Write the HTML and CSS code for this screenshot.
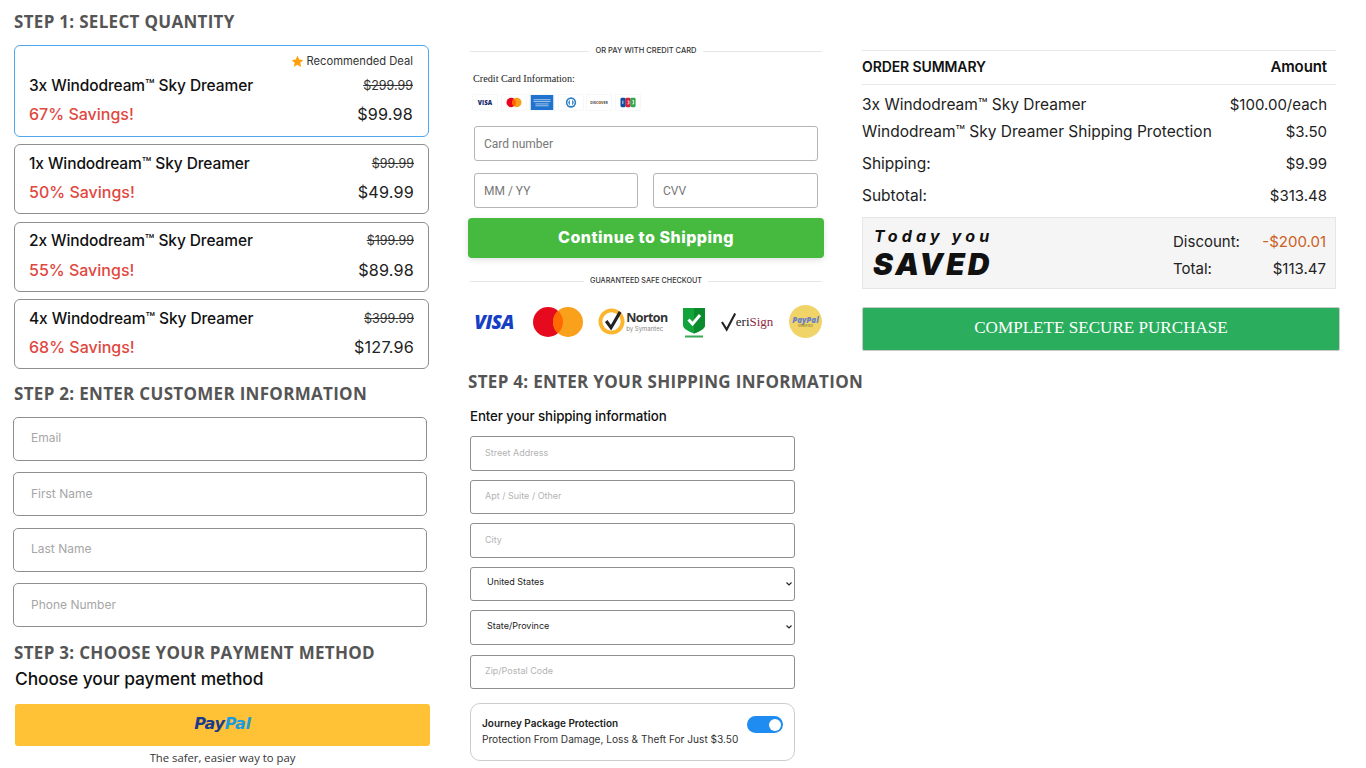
FILE: index.html
```html
<!DOCTYPE html>
<html lang="en">
<head>
<meta charset="utf-8">
<title>Checkout</title>
<link rel="stylesheet" href="styles.css">
</head>
<body>
<main class="page">
  <section class="col col-left">
    <h2 class="step step-1">STEP 1: SELECT QUANTITY</h2>
    <div class="deal deal-active">
      <div class="rec"><svg class="star" viewBox="0 0 24 24"><path d="M12 1.500l3.200 6.900 7.500.9-5.500 5.200 1.400 7.500L12 18l-6.600 3.600 1.400-7.500L1.300 9.300l7.500-.9z"/></svg><span>Recommended Deal</span></div>
      <div class="deal-row"><span class="deal-name">3x Windodream™ Sky Dreamer</span><s class="was">$299.99</s></div>
      <div class="deal-row deal-row-2"><span class="save">67% Savings!</span><span class="now">$99.98</span></div>
    </div>
    <div class="deal">
      <div class="deal-row"><span class="deal-name">1x Windodream™ Sky Dreamer</span><s class="was">$99.99</s></div>
      <div class="deal-row deal-row-2"><span class="save">50% Savings!</span><span class="now">$49.99</span></div>
    </div>
    <div class="deal">
      <div class="deal-row"><span class="deal-name">2x Windodream™ Sky Dreamer</span><s class="was">$199.99</s></div>
      <div class="deal-row deal-row-2"><span class="save">55% Savings!</span><span class="now">$89.98</span></div>
    </div>
    <div class="deal">
      <div class="deal-row"><span class="deal-name">4x Windodream™ Sky Dreamer</span><s class="was">$399.99</s></div>
      <div class="deal-row deal-row-2"><span class="save">68% Savings!</span><span class="now">$127.96</span></div>
    </div>
    <h2 class="step step-2">STEP 2: ENTER CUSTOMER INFORMATION</h2>
    <div class="cust-fields">
      <input class="cust" placeholder="Email">
      <input class="cust" placeholder="First Name">
      <input class="cust" placeholder="Last Name">
      <input class="cust" placeholder="Phone Number">
    </div>
    <h2 class="step step-3">STEP 3: CHOOSE YOUR PAYMENT METHOD</h2>
    <h3 class="choose">Choose your payment method</h3>
    <button class="paypal"><span class="pp-a">Pay</span><span class="pp-b">Pal</span></button>
    <p class="safer">The safer, easier way to pay</p>
  </section>

  <section class="col col-mid">
    <div class="divider div-top"><span>OR PAY WITH CREDIT CARD</span></div>
    <p class="cc-label">Credit Card Information:</p>
    <div class="cards">
      <span class="card"><svg viewBox="0 0 24 16"><text x="12" y="10.500" class="c-visa">VISA</text></svg></span>
      <span class="card"><svg viewBox="0 0 24 16"><circle cx="9" cy="8" r="5" fill="#eb001b"/><circle cx="15" cy="8" r="5" fill="#f79e1b"/><path d="M12 4a5 5 0 0 1 0 8 5 5 0 0 1 0-8z" fill="#ff5f00"/></svg></span>
      <span class="card card-amex"><svg viewBox="0 0 24 16"><rect width="24" height="16" fill="#1f72cd"/><path d="M3 5h18M3 7h18M5 9.500h14M5 11.500h14" stroke="#cfe3f7" stroke-width=".8"/></svg></span>
      <span class="card"><svg viewBox="0 0 24 16"><circle cx="12" cy="8" r="5.500" fill="#2f7fc4"/><circle cx="12" cy="8" r="3.800" fill="#fff"/><path d="M10.800 5.200a3.200 3.200 0 0 0 0 5.600zM13.200 5.200a3.200 3.200 0 0 1 0 5.600z" fill="#2f7fc4"/></svg></span>
      <span class="card"><svg viewBox="0 0 24 16"><text x="12" y="9.500" class="c-disc">DISCOVER</text><circle cx="13.300" cy="8.200" r="1.100" fill="#f08a24"/></svg></span>
      <span class="card"><svg viewBox="0 0 24 16"><rect x="4" y="3" width="5.500" height="10" rx="1.500" fill="#0b4ea2"/><rect x="9.300" y="3" width="5.500" height="10" rx="1.500" fill="#d4213d"/><rect x="14.600" y="3" width="5.500" height="10" rx="1.500" fill="#2fa84f"/><path d="M6.500 6v3.500M11.500 6.500h1.500v3h-1.500M16.500 6h1.500v3.500h-1.500" fill="none" stroke="#fff" stroke-width=".9"/></svg></span>
    </div>
    <input class="pay pay-num" placeholder="Card number">
    <div class="pay-row">
      <input class="pay" placeholder="MM / YY">
      <input class="pay" placeholder="CVV">
    </div>
    <button class="continue">Continue to Shipping</button>
    <div class="divider div-safe"><span>GUARANTEED SAFE CHECKOUT</span></div>
    <div class="trust">
      <svg class="t-visa" viewBox="0 0 46 20"><text x="23" y="16.500" class="visa-big">VISA</text></svg>
      <svg class="t-mc" viewBox="0 0 50 30"><circle cx="15" cy="15" r="15" fill="#e60a1e"/><circle cx="35" cy="15" r="15" fill="#f9a11b"/><path d="M25 3.800a15 15 0 0 1 0 22.400 15 15 0 0 1 0-22.400z" fill="#ff6a00"/></svg>
      <span class="norton"><svg viewBox="0 0 28 28"><circle cx="14" cy="14" r="11.500" fill="none" stroke="#fbb62d" stroke-width="4"/><path d="M8.500 13.500l5 7L23 4" fill="none" stroke="#222" stroke-width="3.200"/></svg><span class="norton-t"><b>Norton</b><i>by Symantec</i></span></span>
      <svg class="t-shield" viewBox="0 0 22 32"><path d="M0 2h22v17c0 4-6 6.500-11 8.500C6 25.500 0 23 0 19z" fill="#12a33b"/><path d="M11 2h11v17c0 4-6 6.500-11 8.500z" fill="#0b8a2e"/><path d="M5.500 13.500l4 4.500 7.500-9" fill="none" stroke="#fff" stroke-width="3"/><rect x="2" y="29.500" width="18" height="2" fill="#3aa856"/></svg>
      <span class="verisign"><svg viewBox="0 0 18 20"><path d="M1 10l5 8L15 1" fill="none" stroke="#222" stroke-width="2.200"/></svg><span class="veri-t"><b>eri</b><em>Sign</em></span></span>
      <span class="pp-seal"><span class="seal-a">PayPal</span><span class="seal-b">VERIFIED</span></span>
    </div>
    <h2 class="step step-4">STEP 4: ENTER YOUR SHIPPING INFORMATION</h2>
    <h3 class="ship-title">Enter your shipping information</h3>
    <div class="ship-fields">
      <input class="ship" placeholder="Street Address">
      <input class="ship" placeholder="Apt / Suite / Other">
      <input class="ship" placeholder="City">
      <select class="ship ship-sel"><option>United States</option></select>
      <select class="ship ship-sel"><option>State/Province</option></select>
      <input class="ship ship-zip" placeholder="Zip/Postal Code">
    </div>
    <div class="protect">
      <div class="protect-text">
        <strong>Journey Package Protection</strong>
        <span>Protection From Damage, Loss &amp; Theft For Just $3.50</span>
      </div>
      <span class="toggle"><span class="knob"></span></span>
    </div>
  </section>

  <section class="col col-right">
    <div class="sum-head"><span>ORDER SUMMARY</span><span class="sum-amt">Amount</span></div>
    <div class="sum-row sr-1"><span class="sum-l">3x Windodream™ Sky Dreamer</span><span>$100.00/each</span></div>
    <div class="sum-row sr-2"><span class="sum-l">Windodream™ Sky Dreamer Shipping Protection</span><span>$3.50</span></div>
    <div class="sum-row sr-3"><span class="sum-l">Shipping:</span><span>$9.99</span></div>
    <div class="sum-row sr-4"><span class="sum-l">Subtotal:</span><span>$313.48</span></div>
    <div class="saved">
      <div class="saved-l"><span class="today">Today you</span><span class="saved-big">SAVED</span></div>
      <div class="saved-r">
        <div class="saved-line"><span>Discount:</span><span class="disc">-$200.01</span></div>
        <div class="saved-line"><span>Total:</span><span>$113.47</span></div>
      </div>
    </div>
    <button class="complete">COMPLETE SECURE PURCHASE</button>
  </section>
</main>
</body>
</html>
```
FILE: styles.css
```css
* { box-sizing: border-box; }
html, body { margin: 0; padding: 0; background: #fff; }
body { width: 1366px; height: 768px; overflow: hidden; font-family: Inter, "Liberation Sans", sans-serif; color: #111; }
h2, h3, p { margin: 0; }
input, select, button { font-family: inherit; display: block; margin: 0; }

.page { display: grid; grid-template-columns: 417px 356px 478px; column-gap: 38px; padding-left: 13px; align-items: start; }
.col { display: flex; flex-direction: column; min-width: 0; }

.step { font-family: "Open Sans", sans-serif; font-weight: 700; font-size: 17px; line-height: 24px; color: #555; letter-spacing: .3px; white-space: nowrap; }
.step-1 { margin: 10px 0 11px 1px; }
.step-2 { margin: 5.100px 0 11px 1px; }
.step-3 { margin: 13.500px 0 1px 1px; }
.step-4 { margin: 32px 0 0 0; }

.deal { margin-left: 1px; width: 415px; height: 70px; border: 1px solid #8f8f8f; border-radius: 6px; padding: 7px 14px 0 14px; margin-bottom: 7.600px; }
.deal-active { height: 91.500px; border: 1.500px solid #4ea6ee; padding: 7px 15px 0 14px; }
.rec { display: flex; justify-content: flex-end; align-items: center; gap: 3px; font-size: 11.200px; line-height: 16px; color: #333; margin-bottom: 5px; }
.star { width: 13px; height: 13px; fill: #ff9f0a; }
.deal-row { display: flex; justify-content: space-between; align-items: center; height: 22px; }
.deal-row-2 { margin-top: 6px; height: 24px; }
.deal-name { font-size: 15.500px; font-weight: 500; letter-spacing: -.1px; color: #111; white-space: nowrap; }
.was { font-size: 12.500px; color: #333; }
.save { font-size: 16px; font-weight: 500; color: #e0483f; }
.now { font-size: 16.200px; color: #222; letter-spacing: .2px; }

.cust-fields { display: flex; flex-direction: column; gap: 11.500px; }
.cust { width: 414px; height: 44px; border: 1px solid #8f8f8f; border-radius: 5px; padding: 0 17px 2px; font-size: 12px; background: #fff; }
.cust::placeholder { color: #a6a6a6; }

.choose { margin-left: 2px; font-size: 17.400px; font-weight: 500; line-height: 26px; color: #111; letter-spacing: -.1px; white-space: nowrap; }
.paypal { margin: 12px 0 0 2px; width: 415px; height: 42px; padding: 0 0 2px; border: 0; border-radius: 3px; background: #ffc136; font-family: "DejaVu Sans", sans-serif; font-size: 16px; font-weight: 700; font-style: italic; letter-spacing: -.3px; }
.pp-a { color: #1b3a8c; }
.pp-b { color: #1b9be0; }
.safer { margin: 3px 0 0 2px; width: 415px; text-align: center; font-family: "Open Sans", sans-serif; font-size: 11.300px; line-height: 17px; color: #333; }

.divider { display: flex; align-items: center; gap: 6px; margin-left: 2px; width: 352px; font-size: 7.500px; line-height: 12px; font-weight: 500; color: #333; white-space: nowrap; }
.divider::before, .divider::after { content: ""; flex: 1; height: 1px; background: #e6e6e6; }
.div-top { margin-top: 45px; }
.cc-label { margin: 15px 0 0 5px; font-family: "Liberation Serif", serif; font-size: 10.200px; line-height: 14px; color: #222; }
.cards { display: flex; gap: 4.600px; margin: 9px 0 0 5px; }
.card { display: block; width: 24px; height: 15px; background: #fff; box-shadow: 0 0 0 .5px #f0f0f0; }
.card svg { display: block; width: 24px; height: 15px; }
.c-visa { font: 800 6.500px "Open Sans", sans-serif; fill: #1a2c6b; text-anchor: middle; }
.c-disc { font: 700 3.800px "Open Sans", sans-serif; fill: #444; text-anchor: middle; }

.pay { height: 35px; border: 1px solid #b5b5b5; border-radius: 3px; padding: 0 9px; font-family: Roboto, sans-serif; font-size: 12px; background: #fff; min-width: 0; }
.pay::placeholder { color: #777; }
.pay-num { margin: 16px 0 0 6px; width: 344px; }
.pay-row { display: grid; grid-template-columns: 164px 165px; column-gap: 15px; margin: 12px 0 0 6px; }
.continue { margin-top: 10px; width: 356px; height: 40px; border: 0; border-radius: 4px; padding: 0 0 2px; background: #46b93f; color: #fff; font-family: Inter, sans-serif; font-size: 16px; font-weight: 800; letter-spacing: .5px; box-shadow: 0 2px 6px rgba(0,0,0,.12); }
.div-safe { margin-top: 17px; font-size: 7.200px; }

.trust { display: flex; align-items: center; justify-content: space-between; margin: 18px 0 0 3px; width: 351px; height: 33px; }
.t-visa { width: 46px; height: 20px; overflow: visible; }
.visa-big { font: italic 800 19px "Open Sans", sans-serif; fill: #1540c4; text-anchor: middle; letter-spacing: -.5px; }
.t-mc { width: 50px; height: 30px; }
.norton { display: flex; align-items: center; gap: 1px; }
.norton svg { width: 27px; height: 27px; }
.norton-t { display: flex; flex-direction: column; }
.norton-t b { font-family: "Open Sans", sans-serif; font-size: 12.500px; line-height: 14px; font-weight: 700; letter-spacing: -.6px; color: #333; }
.norton-t i { font-style: normal; font-size: 6px; line-height: 8px; color: #888; }
.t-shield { width: 22px; height: 32px; }
.verisign { display: flex; align-items: center; }
.verisign svg { width: 17px; height: 20px; }
.veri-t { font-family: "Liberation Serif", serif; font-size: 13px; margin-left: -2px; }
.veri-t b { font-weight: 400; color: #222; }
.veri-t em { font-style: normal; color: #8f2a45; }
.pp-seal { width: 33px; height: 33px; border-radius: 50%; background: #f0d468; display: flex; flex-direction: column; align-items: center; justify-content: center; }
.seal-a { font-family: "Open Sans", sans-serif; font-size: 8px; line-height: 9px; font-weight: 800; font-style: italic; color: #6b80c8; }
.seal-b { font-size: 3.500px; line-height: 5px; color: #7a6a20; }

.ship-title { margin: 12px 0 0 2px; font-size: 13.300px; font-weight: 500; line-height: 20px; letter-spacing: -.1px; color: #111; white-space: nowrap; }
.ship-fields { display: flex; flex-direction: column; gap: 9px; margin: 10px 0 0 2px; }
.ship { width: 325px; height: 34.500px; border: 1px solid #8f8f8f; border-radius: 3px; padding: 0 14px 2px; font-size: 9px; background: #fff; color: #222; }
.ship::placeholder { color: #b3b3b3; }
.ship-zip { margin-top: 1px; }
.ship-sel { appearance: none; padding: 0 0 4px 16px; background-image: url("data:image/svg+xml,%3Csvg xmlns='http://www.w3.org/2000/svg' width='6' height='4'%3E%3Cpath d='M.5.5l2.500 2.500L5.500.5' fill='none' stroke='%23222' stroke-width='1.100'/%3E%3C/svg%3E"); background-repeat: no-repeat; background-position: right 2px center; }
.protect { margin: 14px 0 0 2px; width: 325px; height: 58px; border: 1px solid #ccc; border-radius: 10px; padding: 12px 11px 0 11px; display: flex; justify-content: space-between; align-items: flex-start; }
.protect-text { display: flex; flex-direction: column; gap: 2px; }
.protect-text strong { font-size: 10px; line-height: 14px; font-weight: 600; color: #222; }
.protect-text span { font-size: 10.150px; line-height: 14px; color: #333; white-space: nowrap; }
.toggle { display: flex; justify-content: flex-end; align-items: center; width: 36px; height: 17px; border-radius: 9px; background: #1e8cf0; padding-right: 2px; }
.knob { width: 12px; height: 12px; border-radius: 50%; background: #fff; }

.sum-head { margin-top: 50px; width: 474px; height: 35px; padding: 0 9px 2px 0; border-top: 1px solid #e8e8e8; border-bottom: 1px solid #e8e8e8; display: flex; justify-content: space-between; align-items: center; font-size: 14px; font-weight: 600; letter-spacing: -.1px; color: #111; }
.sum-amt { font-size: 15px; }
.sum-row { width: 474px; padding-right: 9px; display: flex; justify-content: space-between; align-items: center; height: 24px; font-size: 15px; color: #222; white-space: nowrap; }
.sum-l { font-size: 15.500px; }
.sr-1 { margin-top: 7px; }
.sr-2 { margin-top: 3px; }
.sr-3 { margin-top: 8px; }
.sr-4 { margin-top: 8px; }
.saved { margin-top: 10px; width: 474px; height: 72px; background: #f5f5f5; border: 1px solid #e6e6e6; padding: 0 9px 0 10px; display: flex; justify-content: space-between; align-items: center; }
.saved-l { display: flex; flex-direction: column; margin-top: 2px; font-style: italic; color: #111; }
.today { font-size: 16px; line-height: 20px; font-weight: 700; letter-spacing: 4.200px; margin-left: 1px; }
.saved-big { font-size: 30px; line-height: 36px; font-weight: 900; letter-spacing: 3px; }
.saved-r { width: 153px; display: flex; flex-direction: column; gap: 7px; padding-top: 4px; }
.saved-line { display: flex; justify-content: space-between; font-size: 15px; line-height: 20px; color: #222; }
.disc { color: #cc5f24; }
.complete { margin-top: 18px; width: 478px; height: 44px; padding: 0 0 2px; border: 1px solid #c9c9c9; border-radius: 2px; background: #2aae5d; color: #fff; font-family: "Liberation Serif", serif; font-size: 17.100px; }
```
